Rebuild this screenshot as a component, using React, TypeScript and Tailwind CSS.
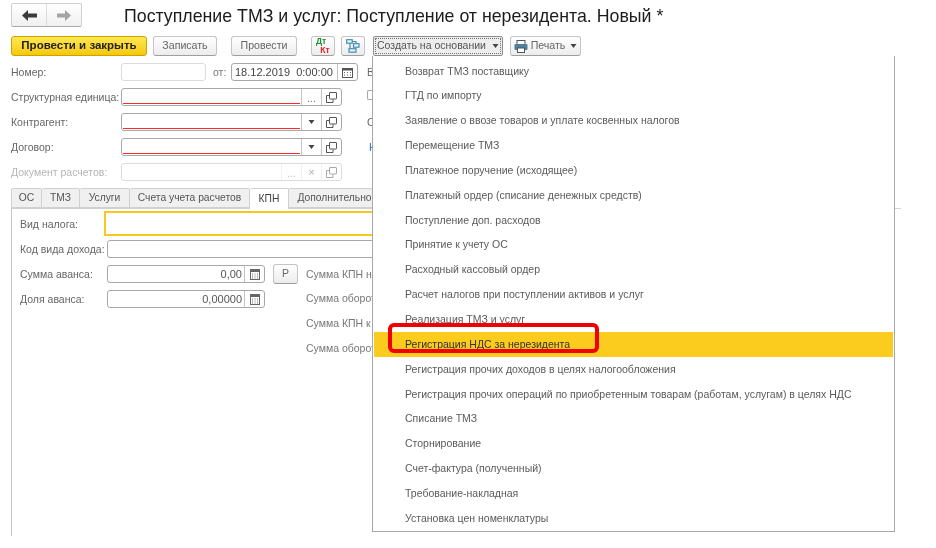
import React from "react";

const font = "font-['Liberation_Sans',Arial,sans-serif]";

const Dots = () => <span className="text-[10px] leading-none mt-[3px] text-[#777]">...</span>;

const Caret = ({ color = "#444" }: { color?: string }) => (
  <svg width="7" height="4" viewBox="0 0 7 4"><path d="M0.5 0h6L3.5 4z" fill={color} /></svg>
);

const CopyIcon = ({ color = "#555" }: { color?: string }) => (
  <svg width="11" height="11" viewBox="0 0 11 11" fill="none" stroke={color} strokeWidth="1">
    <rect x="3.5" y="0.5" width="7" height="6.5" rx="0.5" />
    <path d="M3 3.5H0.5V10.5H7V7.5" />
  </svg>
);

const CalendarIcon = () => (
  <svg width="11" height="11" viewBox="0 0 11 11">
    <rect x="0.5" y="1.5" width="10" height="9" fill="#fff" stroke="#555" />
    <rect x="0.5" y="1" width="10" height="2.5" fill="#555" />
    <path d="M2 5h1v1H2zM5 5h1v1H5zM8 5h1v1H8zM2 7.5h1v1H2zM5 7.5h1v1H5zM8 7.5h1v1H8z" fill="#666" />
  </svg>
);

const CalcIcon = () => (
  <svg width="10" height="11" viewBox="0 0 10 11">
    <rect x="0.5" y="0.5" width="9" height="10" fill="#fff" stroke="#666" />
    <rect x="1" y="1" width="8" height="2" fill="#666" />
    <path d="M2 4.5h1v1H2zM4.5 4.5h1v1h-1zM7 4.5h1v1H7zM2 6.5h1v1H2zM4.5 6.5h1v1h-1zM7 6.5h1v1H7zM2 8.5h1v1H2zM4.5 8.5h1v1h-1zM7 8.5h1v1H7z" fill="#777" />
  </svg>
);

const Field = ({ children, disabled }: { children?: React.ReactNode; disabled?: boolean }) => (
  <div className={`flex h-[18px] w-[221px] rounded-[3px] border ${disabled ? "border-[#dcdcdc]" : "border-[#a8a8a8]"} bg-white`}>
    {children}
  </div>
);

const RedInput = () => (
  <div className="flex-1 flex flex-col justify-end px-[1px] pb-[1px]">
    <div className="h-px bg-[#ff2a2a]" />
  </div>
);

const Cell = ({ children, disabled }: { children: React.ReactNode; disabled?: boolean }) => (
  <div className={`flex h-full w-[20px] items-center justify-center border-l ${disabled ? "border-[#e4e4e4] opacity-50" : "border-[#c4c4c4]"}`}>
    {children}
  </div>
);

const Label = ({ text, muted, w = "w-[110px]" }: { text: string; muted?: boolean; w?: string }) => (
  <div className={`${w} shrink-0 text-[10.5px] leading-[18px] whitespace-nowrap ${muted ? "text-[#b5b5b5]" : "text-[#666]"}`}>{text}</div>
);

const ToolButton = ({ children, w }: { children: React.ReactNode; w: string }) => (
  <div className={`${w} flex h-[20px] items-center justify-center rounded-[3px] border border-[#c4c4c4] border-b-[#9e9e9e] bg-gradient-to-b from-white to-[#ececec] text-[10.6px] text-[#666] whitespace-nowrap`}>
    {children}
  </div>
);

const tabs = [
  { t: "ОС", w: "w-[31px]" },
  { t: "ТМЗ", w: "w-[38px]" },
  { t: "Услуги", w: "w-[50px]" },
  { t: "Счета учета расчетов", w: "w-[120px]" },
  { t: "КПН", w: "w-[39px]", active: true },
  { t: "Дополнительно", w: "w-[92px]" },
];

const menuItems = [
  "Возврат ТМЗ поставщику",
  "ГТД по импорту",
  "Заявление о ввозе товаров и уплате косвенных налогов",
  "Перемещение ТМЗ",
  "Платежное поручение (исходящее)",
  "Платежный ордер (списание денежных средств)",
  "Поступление доп. расходов",
  "Принятие к учету ОС",
  "Расходный кассовый ордер",
  "Расчет налогов при поступлении активов и услуг",
  "Реализация ТМЗ и услуг",
  "Регистрация НДС за нерезидента",
  "Регистрация прочих доходов в целях налогообложения",
  "Регистрация прочих операций по приобретенным товарам (работам, услугам) в целях НДС",
  "Списание ТМЗ",
  "Сторнирование",
  "Счет-фактура (полученный)",
  "Требование-накладная",
  "Установка цен номенклатуры",
];

export default function App() {
  return (
    <div className={`${font} relative h-[548px] w-[936px] overflow-hidden bg-white pl-[11px] text-[#555] blur-[0.3px]`}>
      {/* Header */}
      <div className="flex h-[36px] items-start pt-[3px]">
        <div className="flex h-[24px] w-[71px] rounded-[2px] border border-[#cfcfcf] border-b-[#aaa] bg-gradient-to-b from-white to-[#f0f0f0]">
          <div className="flex w-[35px] items-center justify-center border-r border-[#dcdcdc]">
            <svg width="15" height="11" viewBox="0 0 15 11" fill="#3c3c3c"><path d="M0 5.5 6 0v3.5h9v4H6V11z" /></svg>
          </div>
          <div className="flex flex-1 items-center justify-center">
            <svg width="14" height="11" viewBox="0 0 14 11" fill="#a4a4a4"><path d="M14 5.5 8 0v3.5H0v4h8V11z" /></svg>
          </div>
        </div>
        <div className="ml-[42px] text-[17.75px] leading-[26px] text-[#1c1c1c] whitespace-nowrap">
          Поступление ТМЗ и услуг: Поступление от нерезидента. Новый *
        </div>
      </div>

      {/* Toolbar */}
      <div className="flex h-[20px] items-center">
        <div className="flex h-[20px] w-[136px] items-center justify-center rounded-[3px] border border-[#c9a400] bg-gradient-to-b from-[#ffe94d] to-[#f6c800] text-[11.5px] font-bold text-[#222] whitespace-nowrap">
          Провести и закрыть
        </div>
        <div className="ml-[6px]"><ToolButton w="w-[64px]">Записать</ToolButton></div>
        <div className="ml-[14px]"><ToolButton w="w-[66px]">Провести</ToolButton></div>
        <div className="ml-[14px]">
          <ToolButton w="w-[24px]">
            <div className="flex flex-col items-center text-[8.5px] font-bold leading-[9px]">
              <span className="text-[#1d8f2f] -ml-[4px]">Дт</span>
              <span className="text-[#e8212b] ml-[4px]">Кт</span>
            </div>
          </ToolButton>
        </div>
        <div className="ml-[6px]">
          <ToolButton w="w-[24px]">
            <svg width="14" height="14" viewBox="0 0 14 14" fill="none" stroke="#3f8fb5" strokeWidth="1.2">
              <rect x="0.7" y="0.7" width="5.5" height="3.5" />
              <rect x="7.5" y="4.7" width="5.5" height="3.5" />
              <rect x="3" y="9.7" width="7" height="3.5" />
              <path d="M6 2.5h4v2M4 4.2v5.5" />
            </svg>
          </ToolButton>
        </div>
        <div className="ml-[8px] flex h-[20px] w-[130px] items-center justify-center gap-[6px] rounded-[2px] border border-[#8f8f8f] bg-[#ededed] text-[10.5px] text-[#555] whitespace-nowrap outline-1 -outline-offset-3 outline-dotted outline-[#777]">
          Создать на основании <Caret />
        </div>
        <div className="ml-[7px]">
          <ToolButton w="w-[71px]">
            <svg width="14" height="13" viewBox="0 0 14 13" className="mr-[3px]">
              <rect x="3" y="0.5" width="8" height="4" fill="#fff" stroke="#555" />
              <rect x="0.5" y="4" width="13" height="6" rx="1" fill="#4f7f9f" />
              <rect x="3.5" y="8" width="7" height="4.5" fill="#fff" stroke="#555" />
            </svg>
            Печать <span className="ml-[5px] flex"><Caret /></span>
          </ToolButton>
        </div>
      </div>

      {/* Form */}
      <div className="mt-[7px] flex h-[18px]">
        <Label text="Номер:" />
        <div className="h-[18px] w-[85px] rounded-[3px] border border-[#dcdcdc]" />
        <div className="ml-[7px] w-[18px] text-[10.5px] leading-[18px] text-[#777]">от:</div>
        <div className="flex h-[18px] w-[127px] rounded-[3px] border border-[#a8a8a8] text-[11px] leading-[16px] text-[#444]">
          <div className="flex-1 pl-[3px] whitespace-nowrap">18.12.2019&nbsp; 0:00:00</div>
          <Cell><CalendarIcon /></Cell>
        </div>
        <div className="ml-[9px] text-[10.5px] leading-[18px] text-[#666]">В</div>
      </div>

      <div className="mt-[7px] flex h-[18px]">
        <Label text="Структурная единица:" />
        <Field>
          <RedInput />
          <Cell><Dots /></Cell>
          <Cell><CopyIcon /></Cell>
        </Field>
        <div className="ml-[25px] mt-[2px] h-[10px] w-[6px] rounded-l-[2px] border border-r-0 border-[#a8a8a8]" />
      </div>

      <div className="mt-[7px] flex h-[18px]">
        <Label text="Контрагент:" />
        <Field>
          <RedInput />
          <Cell><Caret /></Cell>
          <Cell><CopyIcon /></Cell>
        </Field>
        <div className="ml-[25px] text-[10.5px] leading-[18px] text-[#666]">С</div>
      </div>

      <div className="mt-[7px] flex h-[18px]">
        <Label text="Договор:" />
        <Field>
          <RedInput />
          <Cell><Caret /></Cell>
          <Cell><CopyIcon /></Cell>
        </Field>
        <div className="ml-[27px] text-[10.5px] leading-[18px] text-[#2a6fc0]">К</div>
      </div>

      <div className="mt-[7px] flex h-[18px]">
        <Label text="Документ расчетов:" muted />
        <Field disabled>
          <div className="flex-1" />
          <Cell disabled><Dots /></Cell>
          <Cell disabled><span className="text-[11px] leading-none">×</span></Cell>
          <Cell disabled><CopyIcon /></Cell>
        </Field>
      </div>

      {/* Tabs */}
      <div className="mt-[7px] flex h-[21px] w-[890px] border-b border-[#d0d0d0]">
        {tabs.map((tab) => (
          <div
            key={tab.t}
            className={`${tab.w} flex shrink-0 items-center justify-center border border-[#d0d0d0] border-l-0 first:border-l text-[10.3px] whitespace-nowrap rounded-t-[2px] ${
              tab.active ? "h-[21px] border-b-0 bg-white text-[#444]" : "h-[20px] bg-[#f0f0f0] text-[#555]"
            }`}
          >
            {tab.t}
          </div>
        ))}
      </div>

      {/* Panel */}
      <div className="h-[327px] w-[400px] border-l border-[#c4c4c4] pl-[8px] pt-[2px]">
        <div className="flex h-[25px] items-center">
          <Label text="Вид налога:" w="w-[84px]" />
          <div className="h-[25px] flex-1 border-2 border-[#f7c81e] bg-white" />
        </div>
        <div className="mt-[4px] flex h-[18px]">
          <Label text="Код вида дохода:" w="w-[87px]" />
          <div className="h-[18px] flex-1 rounded-[3px] border border-[#a8a8a8]" />
        </div>
        <div className="mt-[7px] flex h-[18px]">
          <Label text="Сумма аванса:" w="w-[87px]" />
          <div className="flex h-[18px] w-[158px] rounded-[3px] border border-[#a8a8a8] text-[11px] leading-[16px] text-[#555]">
            <div className="flex-1 pr-[2px] text-right">0,00</div>
            <Cell><CalcIcon /></Cell>
          </div>
          <div className="ml-[8px] -mt-[1px] flex h-[20px] w-[25px] items-center justify-center rounded-[3px] border border-[#c4c4c4] border-b-[#9e9e9e] bg-gradient-to-b from-white to-[#ececec] text-[10.5px] text-[#666]">
            Р
          </div>
          <div className="ml-[8px] text-[10.5px] leading-[18px] text-[#777] whitespace-nowrap">Сумма КПН на</div>
        </div>
        <div className="mt-[7px] flex h-[18px]">
          <Label text="Доля аванса:" w="w-[87px]" />
          <div className="flex h-[18px] w-[158px] rounded-[3px] border border-[#a8a8a8] text-[11px] leading-[16px] text-[#555]">
            <div className="flex-1 pr-[2px] text-right">0,00000</div>
            <Cell><CalcIcon /></Cell>
          </div>
          <div className="ml-[41px] -mt-[1px] text-[10.5px] leading-[18px] text-[#777] whitespace-nowrap">Сумма оборота</div>
        </div>
        <div className="ml-[286px] mt-[6px] text-[10.5px] leading-[18px] text-[#777] whitespace-nowrap">Сумма КПН к</div>
        <div className="ml-[286px] mt-[7px] text-[10.5px] leading-[18px] text-[#777] whitespace-nowrap">Сумма оборота</div>
      </div>

      {/* Stub of the form's rule that shows to the right of the menu */}
      <div className="absolute left-[895px] top-[208px] h-[1px] w-[6px] bg-[#d4d4d4]" />

      {/* Drop-down menu */}
      <div className="absolute left-[372px] top-[56px] h-[476px] w-[523px] border border-t-0 border-[#a8a8a8] bg-white pt-[3px] pl-[1px] pr-[1px]">
        {menuItems.map((item) => (
          <div
            key={item}
            className={`flex h-[24.85px] items-center pl-[31px] text-[10.5px] whitespace-nowrap ${
              item === "Регистрация НДС за нерезидента" ? "bg-[#fbcb1e] text-[#333]" : "text-[#5a5a5a]"
            }`}
          >
            {item}
          </div>
        ))}
      </div>

      {/* Red annotation */}
      <div className="absolute left-[388px] top-[323px] h-[30px] w-[211px] rounded-[6px] border-[4px] border-[#f00000]" />
    </div>
  );
}
